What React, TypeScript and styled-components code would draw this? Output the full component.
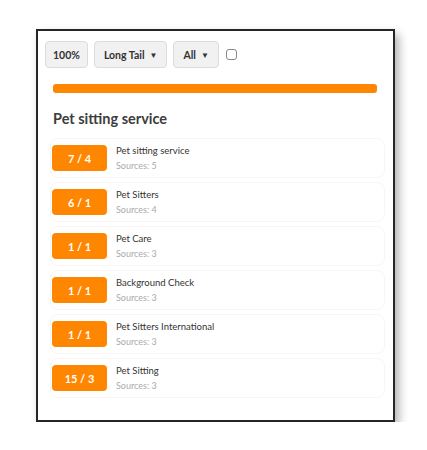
import React from 'react';
import styled, { createGlobalStyle } from 'styled-components';

const GlobalStyle = createGlobalStyle`
  html, body {
    margin: 0;
    padding: 0;
    background: #ffffff;
    font-family: 'Lato', 'Open Sans', sans-serif;
  }
`;

const Frame = styled.div`
  box-sizing: border-box;
  margin: 29px 0 0 36px;
  width: 359px;
  height: 393px;
  border: 2px solid #262626;
  background: #ffffff;
  box-shadow: 4px 5px 9px rgba(0, 0, 0, 0.3);
  padding: 10px 9px 0 7px;
`;

const Toolbar = styled.div`
  display: flex;
  align-items: center;
  gap: 6px;
`;

const ToolButton = styled.button<{ $pad?: number }>`
  box-sizing: border-box;
  height: 27px;
  padding: 0 ${p => p.$pad ?? 7}px;
  border: 1px solid #dcdcdc;
  border-radius: 4px;
  background: #f1f1f1;
  color: #333333;
  font-family: 'Lato', sans-serif;
  font-size: 10.5px;
  font-weight: 700;
  display: flex;
  align-items: center;
  gap: 5px;
`;

const Caret = styled.span`
  font-size: 8px;
  color: #333;
`;

const Check = styled.input`
  width: 11px;
  height: 11px;
  margin: 0 0 0 1px;
  appearance: none;
  border: 1px solid #888;
  border-radius: 3px;
  background: #fff;
`;

const Content = styled.div`
  padding: 16px 0 0 8px;
`;

const Bar = styled.div`
  width: 324px;
  height: 9px;
  border-radius: 3px;
  background: #ff8600;
`;

const Title = styled.h2`
  margin: 17px 0 0 0;
  font-family: 'Lato', sans-serif;
  font-size: 14.5px;
  font-weight: 700;
  color: #3d3d3d;
`;

const List = styled.div`
  display: flex;
  flex-direction: column;
  gap: 4px;
  margin: 11px 0 0 -3px;
`;

const Row = styled.div`
  box-sizing: border-box;
  width: 335px;
  height: 40px;
  display: flex;
  align-items: center;
  gap: 9px;
  padding: 0 1px;
  border: 1px solid #f6f6f6;
  border-radius: 8px;
`;

const Badge = styled.div`
  width: 55px;
  height: 26px;
  border-radius: 4px;
  background: #ff8600;
  color: #ffffff;
  font-family: 'Lato', sans-serif;
  font-size: 11px;
  font-weight: 700;
  display: flex;
  align-items: center;
  justify-content: center;
`;

const Info = styled.div`
  display: flex;
  flex-direction: column;
  gap: 4px;
`;

const Name = styled.div`
  font-family: 'Lato', sans-serif;
  font-size: 9.5px;
  color: #333333;
`;

const Sources = styled.div`
  font-family: 'Lato', sans-serif;
  font-size: 9px;
  color: #aaaaaa;
`;

const rows = [
  { score: '7 / 4', name: 'Pet sitting service', sources: 5 },
  { score: '6 / 1', name: 'Pet Sitters', sources: 4 },
  { score: '1 / 1', name: 'Pet Care', sources: 3 },
  { score: '1 / 1', name: 'Background Check', sources: 3 },
  { score: '1 / 1', name: 'Pet Sitters International', sources: 3 },
  { score: '15 / 3', name: 'Pet Sitting', sources: 3 },
];

export default function App() {
  return (
    <>
      <GlobalStyle />
      <Frame>
        <Toolbar>
          <ToolButton>100%</ToolButton>
          <ToolButton $pad={9}>
            Long Tail <Caret>▼</Caret>
          </ToolButton>
          <ToolButton $pad={9}>
            All <Caret>▼</Caret>
          </ToolButton>
          <Check type="checkbox" />
        </Toolbar>
        <Content>
          <Bar />
          <Title>Pet sitting service</Title>
          <List>
            {rows.map((r, i) => (
              <Row key={i}>
                <Badge>{r.score}</Badge>
                <Info>
                  <Name>{r.name}</Name>
                  <Sources>Sources: {r.sources}</Sources>
                </Info>
              </Row>
            ))}
          </List>
        </Content>
      </Frame>
    </>
  );
}
